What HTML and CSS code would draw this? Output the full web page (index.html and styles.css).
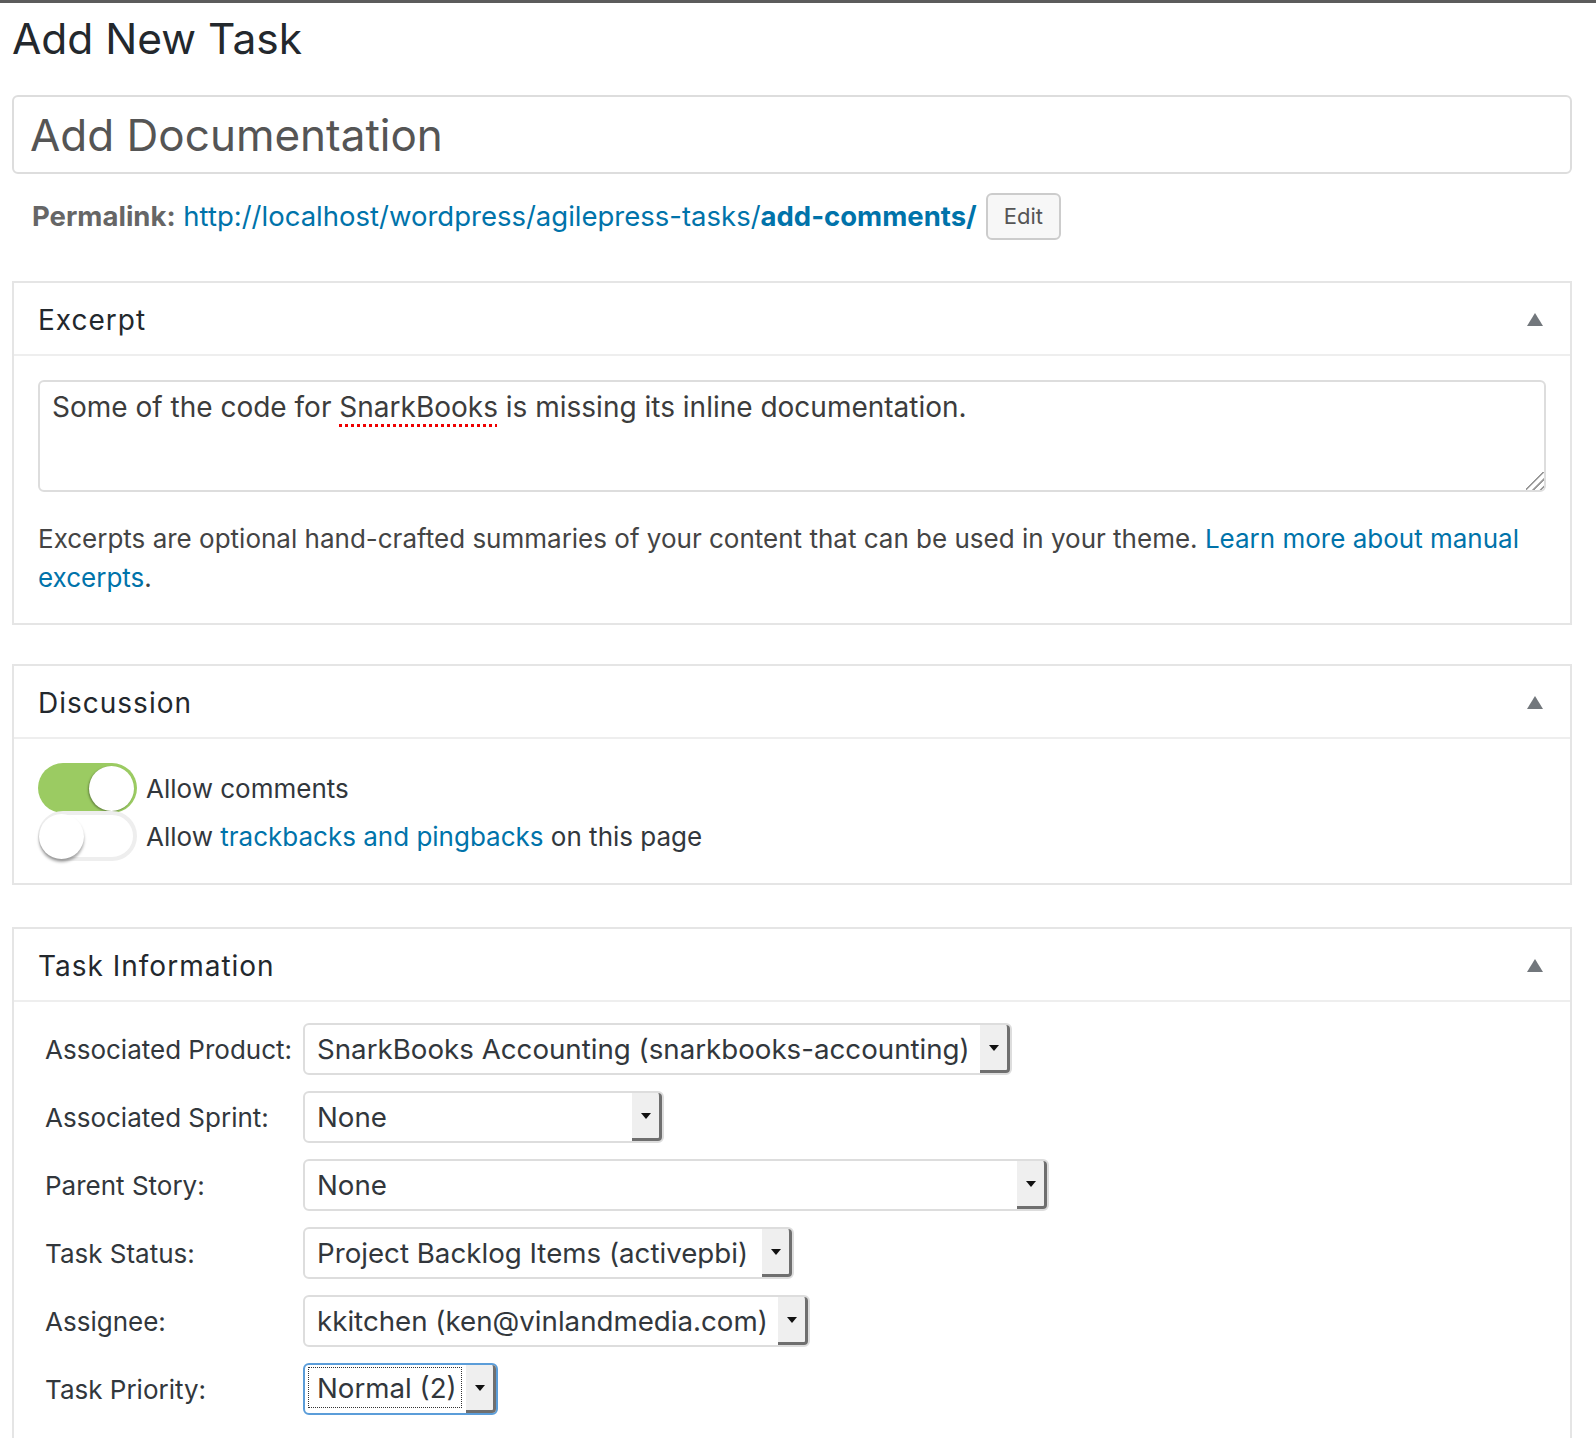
FILE: index.html
```html
<!DOCTYPE html>
<html>
<head>
<meta charset="utf-8">
<title>Add New Task</title>
<link rel="stylesheet" href="styles.css">
</head>
<body>
<div class="topbar"></div>
<div class="wrap">
  <h1 class="page-title">Add New Task</h1>
  <div class="title-input">Add Documentation</div>
  <div class="slug">
    <b class="slug-label">Permalink:</b>&nbsp;<a class="slug-link" href="#">http://localhost/wordpress/agilepress-tasks/<b>add-comments/</b></a>
    <span class="btn">Edit</span>
  </div>

  <div class="postbox first">
    <div class="hndle"><span>Excerpt</span><span class="caret"></span></div>
    <div class="inside excerpt-inside">
      <div class="excerpt">Some of the code for <span class="spell">SnarkBooks</span> is missing its inline documentation.<span class="grip"></span></div>
      <p class="desc">Excerpts are optional hand-crafted summaries of your content that can be used in your theme. <a href="#">Learn more about manual</a> <a href="#">excerpts</a>.</p>
    </div>
  </div>

  <div class="postbox second">
    <div class="hndle"><span>Discussion</span><span class="caret"></span></div>
    <div class="inside toggles">
      <div class="toggle-row"><span class="switch on"><span class="knob"></span></span><span>Allow comments</span></div>
      <div class="toggle-row"><span class="switch off"><span class="knob"></span></span><span>Allow <a href="#">trackbacks and pingbacks</a> on this page</span></div>
    </div>
  </div>

  <div class="postbox last">
    <div class="hndle"><span>Task Information</span><span class="caret"></span></div>
    <div class="inside fields">
      <div class="label">Associated Product:</div>
      <div class="select w1"><span class="val">SnarkBooks Accounting (snarkbooks-accounting)</span><span class="arrow"></span></div>
      <div class="label">Associated Sprint:</div>
      <div class="select w2"><span class="val">None</span><span class="arrow"></span></div>
      <div class="label">Parent Story:</div>
      <div class="select w3"><span class="val">None</span><span class="arrow"></span></div>
      <div class="label">Task Status:</div>
      <div class="select w4"><span class="val">Project Backlog Items (activepbi)</span><span class="arrow"></span></div>
      <div class="label">Assignee:</div>
      <div class="select w5"><span class="val">kkitchen (ken@vinlandmedia.com)</span><span class="arrow"></span></div>
      <div class="label">Task Priority:</div>
      <div class="select w6 focus"><span class="val">Normal (2)</span><span class="arrow"></span></div>
    </div>
  </div>
</div>
</body>
</html>
```

FILE: styles.css
```css
* { box-sizing: border-box; }
body {
  margin: 0;
  background: #fff;
  font-family: Inter, "Liberation Sans", sans-serif;
  color: #444;
  font-size: 26px;
}
a { color: #0073aa; text-decoration: none; }
.topbar { height: 3px; background: #5c5c5c; }
.wrap { padding: 0 24px 0 12px; }
.page-title {
  margin: 6px 0 0;
  font-size: 42.5px;
  font-weight: 400;
  line-height: 60px;
  color: #23282d;
}
.title-input {
  margin-top: 26px;
  height: 79px;
  border: 2px solid #ddd;
  border-radius: 6px;
  padding: 0 16px;
  font-size: 44px;
  line-height: 77px;
  color: #555;
}
.slug {
  margin-top: 18px;
  height: 48px;
  display: flex;
  align-items: center;
  padding: 0 20px;
  font-size: 27.5px;
  color: #666;
}
.btn {
  margin-left: 9px;
  height: 47px;
  line-height: 43px;
  padding: 0 16px;
  border: 2px solid #ccc;
  border-radius: 6px;
  background: #f7f7f7;
  font-size: 22px;
  color: #555;
}
.postbox { margin-top: 42px; border: 2px solid #e5e5e5; background: #fff; }
.postbox.first { margin-top: 41px; }
.postbox.second { margin-top: 39px; }
.postbox.last { border-bottom: none; }
.hndle {
  height: 73px;
  border-bottom: 2px solid #eee;
  display: flex;
  align-items: center;
  justify-content: space-between;
  padding: 2px 27px 0 24px;
  font-size: 28px;
  letter-spacing: 1px;
  color: #23282d;
}
.caret {
  width: 0; height: 0;
  border-left: 8px solid transparent;
  border-right: 8px solid transparent;
  border-bottom: 13px solid #72777c;
}
.inside { padding: 24px 24px 24px; }
.excerpt-inside { padding-bottom: 26px; }
.excerpt {
  position: relative;
  height: 112px;
  border: 2px solid #ddd;
  border-radius: 6px;
  padding: 6px 12px;
  font-size: 28px;
  line-height: 39px;
  color: #3c3c3c;
}
.spell { text-decoration: underline dotted #e00; text-decoration-thickness: 3px; text-underline-offset: 7px; }
.grip {
  position: absolute;
  right: 0; bottom: 0;
  width: 18px; height: 18px;
  background: linear-gradient(135deg, transparent 45%, #999 46%, #999 52%, transparent 53%, transparent 66%, #999 67%, #999 73%, transparent 74%, transparent 86%, #999 87%, #999 93%, transparent 94%);
}
.desc { margin: 27px 0 0; line-height: 39px; }
.toggles { padding: 25px 24px 23px; }
.toggle-row { display: flex; align-items: center; height: 48px; gap: 9px; color: #32373c; }
.switch {
  width: 99px; height: 50px;
  border-radius: 25px;
  display: flex;
  align-items: center;
  flex: none;
}
.switch.on { background: #9bcb62; justify-content: flex-end; padding: 0 3px; }
.switch.off { background: #fff; border: 4px solid #eee; padding: 0; }
.knob {
  width: 45px; height: 45px;
  border-radius: 50%;
  background: #fff;
}
.switch.on .knob { box-shadow: -1px 1px 2px rgba(0,0,0,.35); }
.switch.off .knob { margin-left: -3px; box-shadow: 0 3px 3px rgba(0,0,0,.35); }
.fields {
  display: grid;
  grid-template-columns: 265px auto;
  justify-content: start;
  align-items: center;
  row-gap: 16px;
  padding: 21px 24px 40px;
}
.label { padding-left: 7px; color: #32373c; }
.select {
  height: 52px;
  border: 2px solid #ddd;
  border-radius: 6px;
  display: flex;
  align-items: stretch;
  font-size: 27.7px;
  color: #32373c;
}
.select .val { flex: 1; padding-left: 12px; display: flex; align-items: center; white-space: nowrap; }
.select .arrow {
  width: 30px;
  background: #efefef;
  border-right: 3px solid #6f6f6f;
  border-bottom: 3px solid #6f6f6f;
  border-radius: 0 4px 4px 0;
  display: flex;
  align-items: center;
  justify-content: center;
}
.select .arrow::after {
  content: "";
  border-left: 5px solid transparent;
  border-right: 5px solid transparent;
  border-top: 6px solid #111;
}
.w1 { width: 709px; }
.w2 { width: 361px; }
.w3 { width: 746px; }
.w4 { width: 491px; }
.w5 { width: 507px; }
.w6 { width: 195px; }
.select.focus { border-color: #5b9dd9; }
.select.focus .val { border: 1px dotted #333; margin: 2px 4px 5px 3px; padding-left: 8px; }
```
